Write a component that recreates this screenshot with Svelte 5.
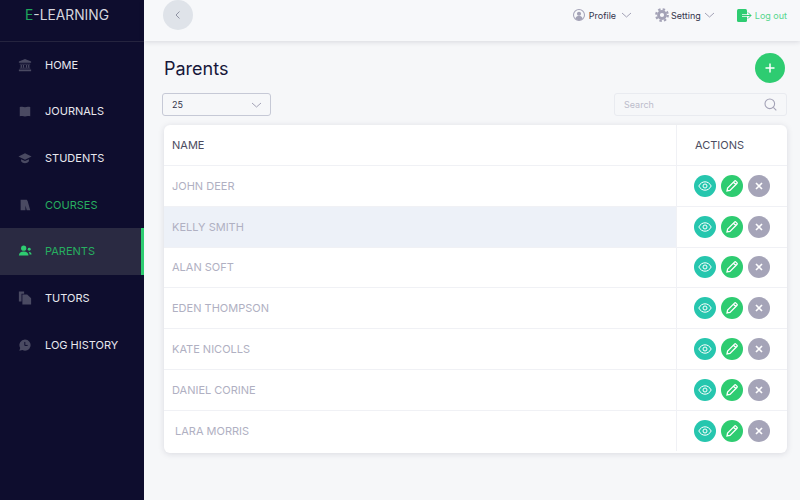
<script>
  const nav = [
    { label: "HOME", icon: "bank" },
    { label: "JOURNALS", icon: "book" },
    { label: "STUDENTS", icon: "cap" },
    { label: "COURSES", icon: "pages", state: "hover" },
    { label: "PARENTS", icon: "users", state: "active" },
    { label: "TUTORS", icon: "copy" },
    { label: "LOG HISTORY", icon: "chat" }
  ]

  const parents = [
    { name: "JOHN DEER" },
    { name: "KELLY SMITH", selected: true },
    { name: "ALAN SOFT" },
    { name: "EDEN THOMPSON" },
    { name: "KATE NICOLLS" },
    { name: "DANIEL CORINE" },
    { name: "LARA MORRIS", indent: true }
  ]
</script>

<div class="app">
  <aside class="sidebar">
    <div class="brand"><span class="brand-e">E</span>-LEARNING</div>
    <nav>
      {#each nav as item}
        <div class="nav-item {item.state ?? ''}">
          <svg class="nav-icon" viewBox="0 0 16 16" width="14" height="14" fill="currentColor">
            {#if item.icon === "bank"}
              <path d="M8 1l7 3v1.500H1V4zM1 13h14v2H1zM2 6.500h12v1H2zM2 11.200h12V12H2z" />
              <path d="M3 8h1.500v3H3zM5.500 8H7v3H5.500zM9 8h1.500v3H9zM11.500 8H13v3h-1.500z" />
            {:else if item.icon === "book"}
              <path d="M2 3.500C4 2.800 6 2.800 8 3.800 10 2.800 12 2.800 14 3.500V14c-2-.6-4-.6-6 .2-2-.8-4-.8-6-.2z" />
            {:else if item.icon === "cap"}
              <path d="M8 2.500l7.500 3.700L8 9.900.5 6.200z" />
              <path d="M3.500 9.300L8 11.500l4.500-2.200v2.500C11.500 13.200 9.800 14 8 14s-3.500-.8-4.500-2.200z" />
            {:else if item.icon === "pages"}
              <path d="M3 2h7l1 1.500 3 10.500h-4L8.500 8.500V14H3z" />
            {:else if item.icon === "users"}
              <circle cx="6.500" cy="4.800" r="3" />
              <path d="M1 13c0-3 2.400-4.500 5.500-4.500S12 10 12 13z" />
              <circle cx="12.800" cy="6" r="1.700" />
              <path d="M13 9c1.400.2 2.500 1.200 2.500 3H13.200c0-1.100-.3-2.100-1-2.800z" />
            {:else if item.icon === "copy"}
              <path d="M1 .5h6v2.500H4v9H1z" />
              <path d="M5 4h5.500L15 8.200v7.300H5z" />
            {:else}
              <path d="M8 1.800a6.300 6.300 0 1 1-3 11.800L1.500 14.500l1-3.200A6.300 6.300 0 0 1 8 1.800z" />
              <path d="M7.800 4.500v4h3.200" fill="none" stroke="#0e0d2e" stroke-width="1.100" />
            {/if}
          </svg>
          <span>{item.label}</span>
        </div>
      {/each}
    </nav>
  </aside>

  <main class="main">
    <header class="topbar">
      <button class="back" aria-label="Back">
        <svg viewBox="0 0 10 10" width="10" height="10" fill="none" stroke="#8f93a3" stroke-width="1">
          <path d="M6.500 1.500L3 5l3.500 3.500" />
        </svg>
      </button>
      <div class="top-links">
        <div class="top-link profile">
          <svg viewBox="0 0 14 14" width="12" height="12">
            <circle cx="7" cy="7" r="6.400" fill="none" stroke="#a3a2b6" stroke-width="1.200" />
            <circle cx="7" cy="5.600" r="2.400" fill="#a3a2b6" />
            <path d="M2.800 11c.6-2 2.200-3 4.200-3s3.600 1 4.200 3c-1 1.200-2.500 2-4.200 2s-3.200-.8-4.200-2z" fill="#a3a2b6" />
          </svg>
          <span>Profile</span>
          <svg class="caret" viewBox="0 0 11 6" width="11" height="6" fill="none" stroke="#a3a2b6" stroke-width="1">
            <path d="M1 1l4.500 4L10 1" />
          </svg>
        </div>
        <div class="top-link setting">
          <svg viewBox="0 0 14 14" width="14" height="14" fill="none" stroke="#a3a2b6">
            <circle cx="7" cy="7" r="5.800" stroke-width="2.200" stroke-dasharray="2.400 2.150" />
            <circle cx="7" cy="7" r="3.500" stroke-width="2.800" />
          </svg>
          <span>Setting</span>
          <svg class="caret" viewBox="0 0 11 6" width="11" height="6" fill="none" stroke="#a3a2b6" stroke-width="1">
            <path d="M1 1l4.500 4L10 1" />
          </svg>
        </div>
        <div class="top-link logout">
          <svg viewBox="0 0 15 13" width="15" height="13">
            <rect x="0" y="0" width="10" height="13" rx="1.500" fill="#2ecc71" />
            <path d="M5 6.500h9M11 3.500l3 3-3 3" fill="none" stroke="#f7f8fa" stroke-width="2.400" />
            <path d="M5 6.500h9M11 3.500l3 3-3 3" fill="none" stroke="#2ecc71" stroke-width="1" />
          </svg>
          <span>Log out</span>
        </div>
      </div>
    </header>

    <section class="content">
      <div class="title-row">
        <h1>Parents</h1>
        <button class="add" aria-label="Add">
          <svg viewBox="0 0 10 10" width="10" height="10" stroke="#fff" stroke-width="1.500">
            <path d="M5 .5v9M.5 5h9" />
          </svg>
        </button>
      </div>

      <div class="filters">
        <div class="select">
          <span>25</span>
          <svg viewBox="0 0 11 6" width="11" height="6" fill="none" stroke="#a3a2b6" stroke-width="1">
            <path d="M1 1l4.500 4L10 1" />
          </svg>
        </div>
        <div class="search">
          <span>Search</span>
          <svg viewBox="0 0 13 13" width="13" height="13" fill="none" stroke="#a3a2b6" stroke-width="1.100">
            <circle cx="5.800" cy="5.800" r="4.800" />
            <path d="M9.300 9.300l3 3" />
          </svg>
        </div>
      </div>

      <div class="table">
        <div class="row head">
          <div class="cell-name">NAME</div>
          <div class="cell-actions">ACTIONS</div>
        </div>
        {#each parents as parent}
          <div class="row" class:selected={parent.selected}>
            <div class="cell-name" class:indent={parent.indent}>{parent.name}</div>
            <div class="cell-actions">
              <button class="action view" aria-label="View">
                <svg viewBox="0 0 14 10" width="14" height="10" fill="none" stroke="#fff" stroke-width="1">
                  <path d="M.8 5C2.300 2.200 4.500.8 7 .8s4.700 1.400 6.200 4.200C11.700 7.800 9.500 9.200 7 9.200S2.300 7.800.8 5z" />
                  <circle cx="7" cy="5" r="2" />
                </svg>
              </button>
              <button class="action edit" aria-label="Edit">
                <svg viewBox="0 0 12 12" width="12" height="12" fill="none" stroke="#fff" stroke-width="1.300">
                  <path d="M1 11l.6-3L8.500 1.100a1 1 0 0 1 1.400 0l1 1a1 1 0 0 1 0 1.400L4 10.400zM7.500 2.200l2.300 2.300" />
                </svg>
              </button>
              <button class="action remove" aria-label="Remove">
                <svg viewBox="0 0 8 8" width="8" height="8" stroke="#fff" stroke-width="1.700">
                  <path d="M1 1l6 6M7 1L1 7" />
                </svg>
              </button>
            </div>
          </div>
        {/each}
      </div>
    </section>
  </main>
</div>

<style>
  :global(body) {
    margin: 0;
    background: #f6f7f9;
  }

  .app {
    display: flex;
    width: 800px;
    height: 500px;
    overflow: hidden;
    font-family: Inter, "Liberation Sans", sans-serif;
  }

  .sidebar {
    width: 144px;
    flex-shrink: 0;
    background: #0e0d2e;
    color: #e8e8ee;
  }

  .brand {
    height: 42px;
    box-sizing: border-box;
    padding: 7px 0 0 25px;
    border-bottom: 1px solid #25243f;
    font-size: 13.800px;
    line-height: 16px;
    color: #d5d6dd;
  }

  .brand-e {
    color: #1fa65c;
  }

  nav {
    margin-top: -0.700px;
  }

  .nav-item {
    display: flex;
    align-items: center;
    height: 46.700px;
    box-sizing: border-box;
    padding-left: 18px;
    gap: 13px;
    font-size: 11px;
  }

  .nav-icon {
    color: #4a4a62;
    flex-shrink: 0;
  }

  .nav-item.hover {
    color: #27ae60;
  }

  .nav-item.active {
    background: #2a2a42;
    border-right: 3px solid #2ecc71;
    color: #27ae60;
  }

  .nav-item.active .nav-icon {
    color: #2ecc71;
  }

  .main {
    flex: 1;
    min-width: 0;
    display: flex;
    flex-direction: column;
  }

  .topbar {
    display: flex;
    align-items: center;
    justify-content: space-between;
    height: 41px;
    flex-shrink: 0;
    padding: 0 13px 0 19px;
    background: #f7f8fa;
    box-shadow: 0 1px 5px rgba(30, 30, 60, 0.140);
  }

  button {
    display: flex;
    align-items: center;
    justify-content: center;
    border: none;
    border-radius: 50%;
    padding: 0;
    cursor: pointer;
  }

  .back {
    width: 30px;
    height: 30px;
    margin-bottom: 12px;
    background: #dfe3e9;
  }

  .top-links {
    display: flex;
    align-items: center;
    margin-bottom: 11px;
    font-size: 9px;
    color: #33334a;
  }

  .top-link {
    display: flex;
    align-items: center;
  }

  .profile {
    gap: 4px;
    margin-right: 23px;
  }

  .profile .caret {
    margin-left: 1px;
  }

  .setting {
    gap: 2px;
    margin-right: 22px;
  }

  .setting .caret {
    margin-left: 1px;
  }

  .logout {
    gap: 3px;
    color: #56d68d;
  }

  .content {
    padding: 0 13px 0 18px;
  }

  .title-row {
    display: flex;
    align-items: center;
    justify-content: space-between;
    height: 30px;
    margin-top: 12px;
    padding: 0 2px;
  }

  h1 {
    margin: 0;
    font-size: 18px;
    font-weight: 400;
    color: #17173a;
  }

  .add {
    width: 30px;
    height: 30px;
    background: #2ecc71;
  }

  .filters {
    display: flex;
    justify-content: space-between;
    margin-top: 10px;
  }

  .select {
    display: flex;
    align-items: center;
    justify-content: space-between;
    width: 109px;
    height: 23px;
    box-sizing: border-box;
    padding: 0 8px 0 9px;
    border: 1px solid #c6c9d6;
    border-radius: 3px;
    font-size: 9px;
    color: #33334a;
  }

  .search {
    display: flex;
    align-items: center;
    justify-content: space-between;
    width: 173px;
    height: 23px;
    box-sizing: border-box;
    padding: 0 9px;
    border: 1px solid #e9ebf0;
    border-radius: 3px;
    font-size: 9px;
    color: #bcbccb;
  }

  .table {
    margin: 9px 0 0 2px;
    border-radius: 6px;
    background: #fff;
    box-shadow: 0 1px 6px rgba(30, 30, 60, 0.130);
    overflow: hidden;
  }

  .row {
    display: flex;
    height: 40.800px;
    box-sizing: border-box;
    border-top: 1px solid #f0f1f5;
    font-size: 11px;
    color: #b0b0c2;
  }

  .row:last-child {
    height: 43px;
    padding-bottom: 2px;
  }

  .row.head {
    height: 40px;
    border-top: none;
    color: #4c4c60;
  }

  .row.selected .cell-name {
    background: #edf1f8;
  }

  .cell-name {
    flex: 1;
    display: flex;
    align-items: center;
    padding-left: 8px;
  }

  .cell-name.indent {
    padding-left: 11px;
  }

  .cell-actions {
    display: flex;
    align-items: center;
    gap: 5px;
    width: 111px;
    box-sizing: border-box;
    padding-left: 17px;
    border-left: 1px solid #f0f1f5;
  }

  .head .cell-actions {
    padding-left: 18px;
  }

  .action {
    width: 22px;
    height: 22px;
  }

  .view {
    background: #26c6ae;
  }

  .edit {
    background: #2ecc71;
  }

  .remove {
    background: #a5a4b8;
  }
</style>
